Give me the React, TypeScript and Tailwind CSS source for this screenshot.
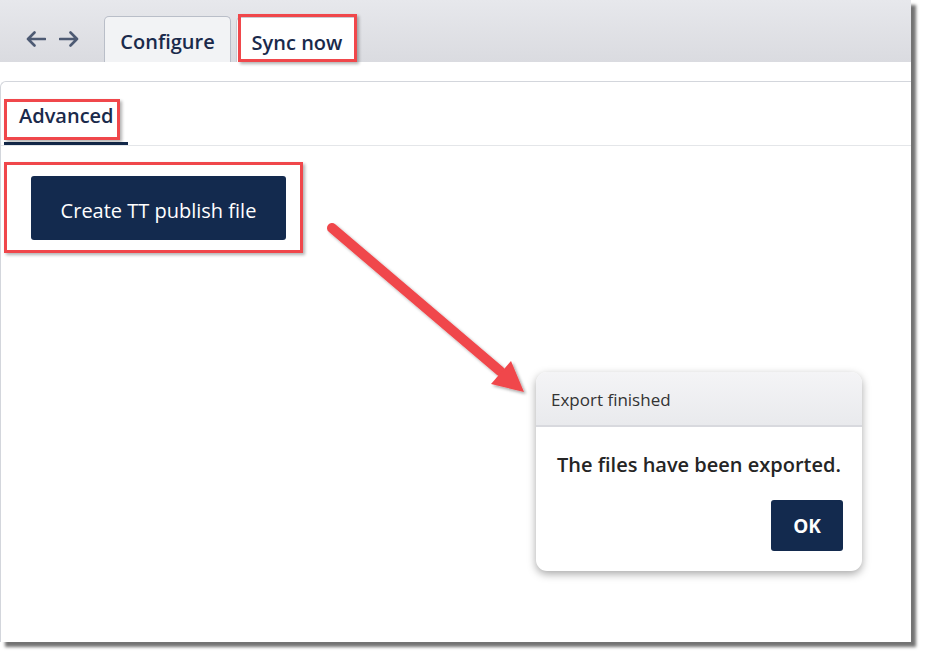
import React from "react";

const font = { fontFamily: '"Open Sans", "Noto Sans", sans-serif' };

function NavArrow({ dir }: { dir: "left" | "right" }) {
  return (
    <svg width="20" height="16" viewBox="0 0 20 16" className="text-[#4d5a73]">
      {dir === "left" ? (
        <path d="M19 8H2M8.5 1.5L2 8l6.5 6.5" fill="none" stroke="currentColor" strokeWidth="2.6" strokeLinecap="round" strokeLinejoin="round" />
      ) : (
        <path d="M1 8h17M11.5 1.5L18 8l-6.5 6.5" fill="none" stroke="currentColor" strokeWidth="2.6" strokeLinecap="round" strokeLinejoin="round" />
      )}
    </svg>
  );
}

export default function App() {
  return (
    <div className="relative w-[926px] h-[657px] bg-white overflow-hidden" style={font}>
      <div className="w-[911px] h-[642px] flex flex-col bg-white shadow-[5px_5px_3px_rgba(0,0,0,0.55)]">
        {/* top bar */}
        <div className="h-[62px] flex items-end bg-gradient-to-b from-[#e7e8ec] to-[#dadbe0]">
          <div className="flex items-center gap-[13px] pl-[26px] pb-[15px]">
            <NavArrow dir="left" />
            <NavArrow dir="right" />
          </div>
          <div className="ml-[25px] flex items-end">
            <div className="w-[127px] h-[46px] pt-[5px] border border-b-0 border-[#b9bec8] rounded-t-[5px] bg-[#f2f3f5] flex items-center justify-center text-[20px] font-semibold text-[#1a2a4b]">
              Configure
            </div>
            <div className="ml-[5px] w-[121px] h-[45px] pt-[5px] border-l border-t border-[#c9ccd3] rounded-tl-[5px] bg-white flex items-center justify-center text-[20px] font-semibold text-[#1a2a4b]">
              Sync now
            </div>
          </div>
        </div>
        <div className="h-[19px] bg-white" />
        {/* panel */}
        <div className="flex-1 flex flex-col border-l border-t border-[#d3d6dc] rounded-tl-[6px]">
          <div className="h-[64px] flex items-end border-b border-[#e4e6e9] pl-[3px]">
            <div className="w-[124px] h-[49px] flex items-start pl-[15px] pt-[5px] border-b-[3px] border-[#13294b] text-[20px] font-semibold text-[#1a2a4b]">
              Advanced
            </div>
          </div>
          <div className="pl-[30px] pt-[30px]">
            <button className="w-[255px] h-[64px] pt-[5px] rounded-[3px] bg-[#132a4e] text-white text-[20px] flex items-center justify-center">
              Create TT publish file
            </button>
          </div>
        </div>
      </div>

      {/* red annotation boxes */}
      <div className="absolute left-[238px] top-[14px] w-[119px] h-[48px] border-[3px] border-[#f0474b] shadow-[2px_2px_3px_rgba(0,0,0,0.3)]" />
      <div className="absolute left-[4px] top-[99px] w-[116px] h-[41px] border-[3px] border-[#f0474b] shadow-[2px_2px_3px_rgba(0,0,0,0.3)]" />
      <div className="absolute left-[4px] top-[162px] w-[299px] h-[91px] border-[3px] border-[#f0474b] shadow-[2px_2px_3px_rgba(0,0,0,0.3)]" />

      {/* arrow */}
      <svg className="absolute left-0 top-0" width="926" height="657" viewBox="0 0 926 657">
        <defs>
          <filter id="sh" x="-10%" y="-10%" width="130%" height="130%">
            <feDropShadow dx="2" dy="2" stdDeviation="1.5" floodColor="#000" floodOpacity="0.35" />
          </filter>
        </defs>
        <g filter="url(#sh)">
          <line x1="332" y1="228" x2="500" y2="371" stroke="#f0474b" strokeWidth="10" strokeLinecap="round" />
          <polygon points="524,392 491,384 511,361" fill="#f0474b" />
        </g>
      </svg>

      {/* dialog */}
      <div className="absolute left-[536px] top-[372px] w-[326px] h-[199px] rounded-[11px] bg-white shadow-[0_3px_8px_rgba(0,0,0,0.35)] flex flex-col overflow-hidden">
        <div className="h-[55px] shrink-0 pt-[2px] border-b-2 border-[#d8d9de] bg-gradient-to-b from-[#f4f4f6] to-[#e9eaed] flex items-center pl-[15px] text-[17px] text-[#333]">
          Export finished
        </div>
        <div className="flex-1 flex flex-col">
          <div className="pt-[23px] text-center text-[20px] font-semibold text-[#252525]">
            The files have been exported.
          </div>
          <div className="flex justify-end pr-[19px] pt-[20px]">
            <button className="w-[72px] h-[51px] pt-[2px] rounded-[3px] bg-[#132a4e] text-white text-[19px] font-bold">
              OK
            </button>
          </div>
        </div>
      </div>
    </div>
  );
}
